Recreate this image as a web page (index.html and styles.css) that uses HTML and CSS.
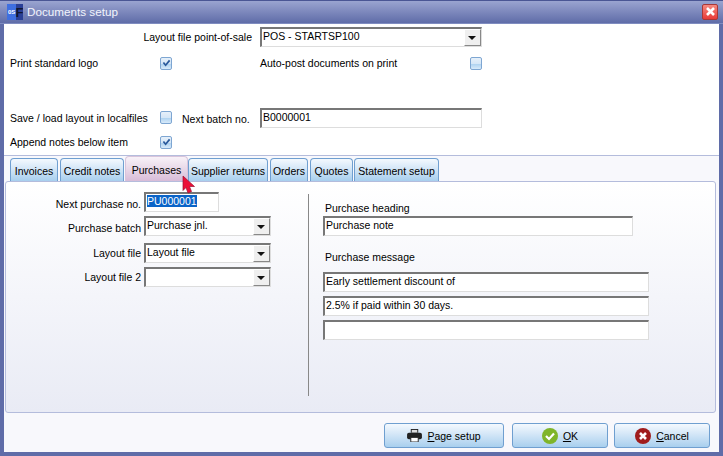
FILE: index.html
```html
<!DOCTYPE html>
<html lang="en">
<head>
    <meta charset="UTF-8">
    <title>Documents setup</title>
    <link rel="stylesheet" href="styles.css">
</head>
<body>
    <div class="window">
        <div class="titlebar">
            <svg class="app-icon" width="16" height="16" viewBox="0 0 16 16">
                <rect width="16" height="16" fill="#3f6fe0"/>
                <rect x="9" y="0" width="7" height="16" fill="#2a3f96"/>
                <text x="1" y="10" font-size="6" font-weight="bold" fill="#fff" font-family="Liberation Sans">0S</text>
                <text x="8.5" y="13" font-size="13" font-weight="bold" fill="#10152e" font-family="Liberation Sans">F</text>
            </svg>
            <span class="title">Documents setup</span>
            <div class="close">
                <svg width="11" height="11" viewBox="0 0 11 11"><path d="M2 2L9 9M9 2L2 9" stroke="#fff" stroke-width="2.6"/></svg>
            </div>
        </div>

        <div class="top">
            <div class="row row-layout">
                <label class="lbl-pos">Layout file point-of-sale</label>
                <div class="field combo w-main">POS - STARTSP100<span class="arrow"></span></div>
            </div>
            <div class="row row-logo">
                <label class="lbl-check">Print standard logo</label>
                <span class="check on"><svg width="9" height="8" viewBox="0 0 10 9"><path d="M1.5 4L4 7L8.5 1.5" fill="none" stroke="#2a5a9c" stroke-width="2"/></svg></span>
                <label class="lbl-auto">Auto-post documents on print</label>
                <span class="check"></span>
            </div>
            <div class="row row-local">
                <label class="lbl-check">Save / load layout in localfiles</label>
                <span class="check"></span>
                <label class="lbl-batch">Next batch no.</label>
                <div class="field w-main">B0000001</div>
            </div>
            <div class="row row-notes">
                <label class="lbl-check">Append notes below item</label>
                <span class="check on"><svg width="9" height="8" viewBox="0 0 10 9"><path d="M1.5 4L4 7L8.5 1.5" fill="none" stroke="#2a5a9c" stroke-width="2"/></svg></span>
            </div>
        </div>

        <div class="middle">
            <div class="tabs">
                <div class="tab t-inv">Invoices</div>
                <div class="tab t-cred">Credit notes</div>
                <div class="tab active t-pur">Purchases</div>
                <div class="tab t-sup">Supplier returns</div>
                <div class="tab t-ord">Orders</div>
                <div class="tab t-quo">Quotes</div>
                <div class="tab t-sta">Statement setup</div>
            </div>
            <div class="panel">
                <div class="col-left">
                    <div class="frow fr-1">
                        <label class="lbl-low">Next purchase no.</label>
                        <div class="field w-no"><span class="selected">PU000001</span></div>
                    </div>
                    <div class="frow fr-2">
                        <label class="lbl-low">Purchase batch</label>
                        <div class="field combo w-sel">Purchase jnl.<span class="arrow"></span></div>
                    </div>
                    <div class="frow fr-3">
                        <label>Layout file</label>
                        <div class="field combo w-sel">Layout file<span class="arrow"></span></div>
                    </div>
                    <div class="frow fr-4">
                        <label>Layout file 2</label>
                        <div class="field combo w-sel"><span class="arrow"></span></div>
                    </div>
                </div>
                <div class="col-right">
                    <div class="cap cap-head">Purchase heading</div>
                    <div class="field w-head">Purchase note</div>
                    <div class="cap cap-msg">Purchase message</div>
                    <div class="field w-msg">Early settlement discount of</div>
                    <div class="field w-msg msg-next">2.5% if paid within 30 days.</div>
                    <div class="field w-msg msg-next"></div>
                </div>
            </div>
        </div>

        <div class="footer">
            <button class="btn btn-page">
                <svg width="15" height="13" viewBox="0 0 16 14">
                    <rect x="4" y="0" width="8" height="4" fill="#222"/>
                    <rect x="5" y="1" width="6" height="3" fill="#ddd"/>
                    <rect x="0" y="4" width="16" height="7" rx="2" fill="#222"/>
                    <rect x="4" y="9" width="8" height="5" fill="#fff" stroke="#222"/>
                </svg>
                <span><u>P</u>age setup</span>
            </button>
            <button class="btn btn-ok">
                <svg width="16" height="16" viewBox="0 0 16 16">
                    <circle cx="8" cy="8" r="8" fill="#7fb52a"/>
                    <path d="M4 8L7 11L12 5.5" fill="none" stroke="#fff" stroke-width="2.2"/>
                </svg>
                <span><u>O</u>K</span>
            </button>
            <button class="btn btn-cancel">
                <svg width="16" height="16" viewBox="0 0 16 16">
                    <circle cx="8" cy="8" r="8" fill="#a01c1c"/>
                    <path d="M5 5L11 11M11 5L5 11" stroke="#fff" stroke-width="2.6"/>
                </svg>
                <span><u>C</u>ancel</span>
            </button>
        </div>

        <svg class="cursor" width="14" height="19" viewBox="0 0 14 19">
            <path d="M1 1L1 15.5L4 12.5L6 18L9.5 16.5L7.5 11.5L12.5 11.5Z" fill="#ec1038" stroke="#9a1030" stroke-width="0.7"/>
        </svg>
    </div>
</body>
</html>
```

FILE: styles.css
```css
* {
    box-sizing: border-box;
}

body {
    margin: 0;
    font-family: "Liberation Sans", Arial, sans-serif;
    font-size: 10.5px;
    color: #000;
    background: #5f6ca8;
}

.window {
    position: relative;
    width: 723px;
    height: 456px;
    display: flex;
    flex-direction: column;
    padding: 0 4px 4px 4px;
    background: #5f6ca8;
    overflow: hidden;
}

/* title bar */
.titlebar {
    display: flex;
    align-items: center;
    height: 24px;
    margin: 0 -4px;
    padding: 0 5px 0 7px;
    background: linear-gradient(#9aa4d0, #5f6ca8);
    border-top: 1px solid #4a5694;
    border-bottom: 1px solid #7f8cc0;
}

.title {
    margin-left: 4px;
    color: #f2f4fc;
    font-size: 11.7px;
}

.close {
    margin-left: auto;
    width: 16px;
    height: 16px;
    display: flex;
    align-items: center;
    justify-content: center;
    border-radius: 2px;
    border: 1px solid #a83838;
    background: linear-gradient(#f58a80, #e83a38);
}

/* top settings */
.top {
    height: 133px;
    padding-top: 3px;
    background: #fff;
    border-bottom: 1px solid #b4bcdc;
}

.row {
    display: flex;
    align-items: center;
}

.row-layout {
    height: 20px;
}

.row-logo {
    height: 13px;
    margin-top: 10px;
}

.row-local {
    height: 20px;
    margin-top: 38px;
}

.row-notes {
    height: 13px;
    margin-top: 8px;
}

.lbl-pos {
    width: 248px;
    text-align: right;
    margin-right: 8px;
}

.lbl-check {
    width: 156px;
    padding-left: 6px;
    white-space: nowrap;
}

.lbl-auto {
    width: 210px;
    margin-left: 88px;
}

.lbl-batch {
    width: 78px;
    margin-left: 10px;
    white-space: nowrap;
    padding-top: 3px;
}

.check {
    width: 12px;
    height: 13px;
    display: flex;
    align-items: center;
    justify-content: center;
    border: 1px solid #7ea6d2;
    border-radius: 2px;
    background: linear-gradient(#e6f0fa 0%, #d6e7f7 50%, #aed2f0 55%, #d8eafa 100%);
}

/* inputs */
.field {
    position: relative;
    height: 20px;
    line-height: 15px;
    padding-left: 1px;
    background: #fff;
    border-top: 2px solid #777;
    border-left: 2px solid #777;
    border-right: 1px solid #ddd;
    border-bottom: 1px solid #ddd;
    white-space: nowrap;
}

.combo .arrow {
    position: absolute;
    top: 0;
    right: 0;
    width: 17px;
    height: 17px;
    background: #efefef;
    border: 1px solid #fff;
    border-right-color: #888;
    border-bottom-color: #888;
}

.combo .arrow::after {
    content: "";
    position: absolute;
    left: 3px;
    top: 6px;
    border-left: 4px solid transparent;
    border-right: 4px solid transparent;
    border-top: 4px solid #111;
}

.w-main {
    width: 222px;
}

.w-no {
    width: 75px;
}

.w-sel {
    width: 127px;
}

.w-head {
    width: 310px;
}

.w-msg {
    width: 326px;
}

.selected {
    background: #0a64c8;
    color: #fff;
}

/* tabs */
.middle {
    flex: 1;
    display: flex;
    flex-direction: column;
    background: #f8f8fc;
}

.tabs {
    display: flex;
    align-items: flex-end;
    height: 25px;
    padding-left: 6px;
}

.tab {
    height: 23px;
    margin-right: 2px;
    padding-top: 6px;
    text-align: center;
    border: 1px solid #6f9fd0;
    border-bottom: 0;
    border-radius: 4px 4px 0 0;
    background: linear-gradient(#f4f9fe, #d3e6f7 45%, #a8cfee);
    white-space: nowrap;
}

.tab.active {
    height: 25px;
    margin-right: 0;
    margin-left: -1px;
    padding-top: 7px;
    border-color: #d8c4dc;
    background: linear-gradient(#f8f2f8, #e8d8e8 50%, #d8bcd8);
}

.t-inv { width: 48px; }
.t-cred { width: 64px; }
.t-pur { width: 63px; }
.t-sup { width: 80px; }
.t-ord { width: 38px; }
.t-quo { width: 43px; margin-right: 1px; }
.t-sta { width: 85px; }

.panel {
    display: flex;
    width: 711px;
    height: 232px;
    margin-left: 1px;
    border: 1px solid #b4bcdc;
    border-radius: 3px;
    background: linear-gradient(#fff, #e9ebf5);
}

.col-left {
    width: 303px;
    margin: 12px 0 17px 0;
    border-right: 1px solid #888;
    height: 202px;
}

.frow {
    display: flex;
    align-items: center;
}

.frow label {
    width: 135px;
    margin-right: 3px;
    text-align: right;
    white-space: nowrap;
}

.frow .lbl-low {
    padding-top: 3px;
}

.fr-1 { margin-top: -2px; }
.fr-2 { margin-top: 4px; }
.fr-3 { margin-top: 7px; }
.fr-4 { margin-top: 4px; }

.col-right {
    padding: 19px 0 0 14px;
}

.cap {
    padding-left: 2px;
    line-height: 14px;
}

.cap-head {
    margin-bottom: 1px;
}

.cap-msg {
    margin: 14px 0 8px 0;
}

.msg-next {
    margin-top: 4px;
}

/* bottom buttons */
.footer {
    display: flex;
    justify-content: flex-end;
    height: 39px;
    padding: 10px 9px 0 0;
    background: #f8f8fc;
}

.btn {
    display: flex;
    align-items: center;
    justify-content: center;
    gap: 5px;
    height: 25px;
    margin-left: 7px;
    padding: 0;
    font: inherit;
    color: #000;
    border: 1px solid #6f9fd0;
    border-radius: 3px;
    background: linear-gradient(#f4f9fe, #d3e6f7 45%, #a8cfee);
}

.btn-page { width: 120px; margin-right: 1px; }
.btn-ok { width: 96px; }
.btn-cancel { width: 96px; margin-left: 6px; }

.cursor {
    position: absolute;
    left: 182px;
    top: 175px;
}
```
